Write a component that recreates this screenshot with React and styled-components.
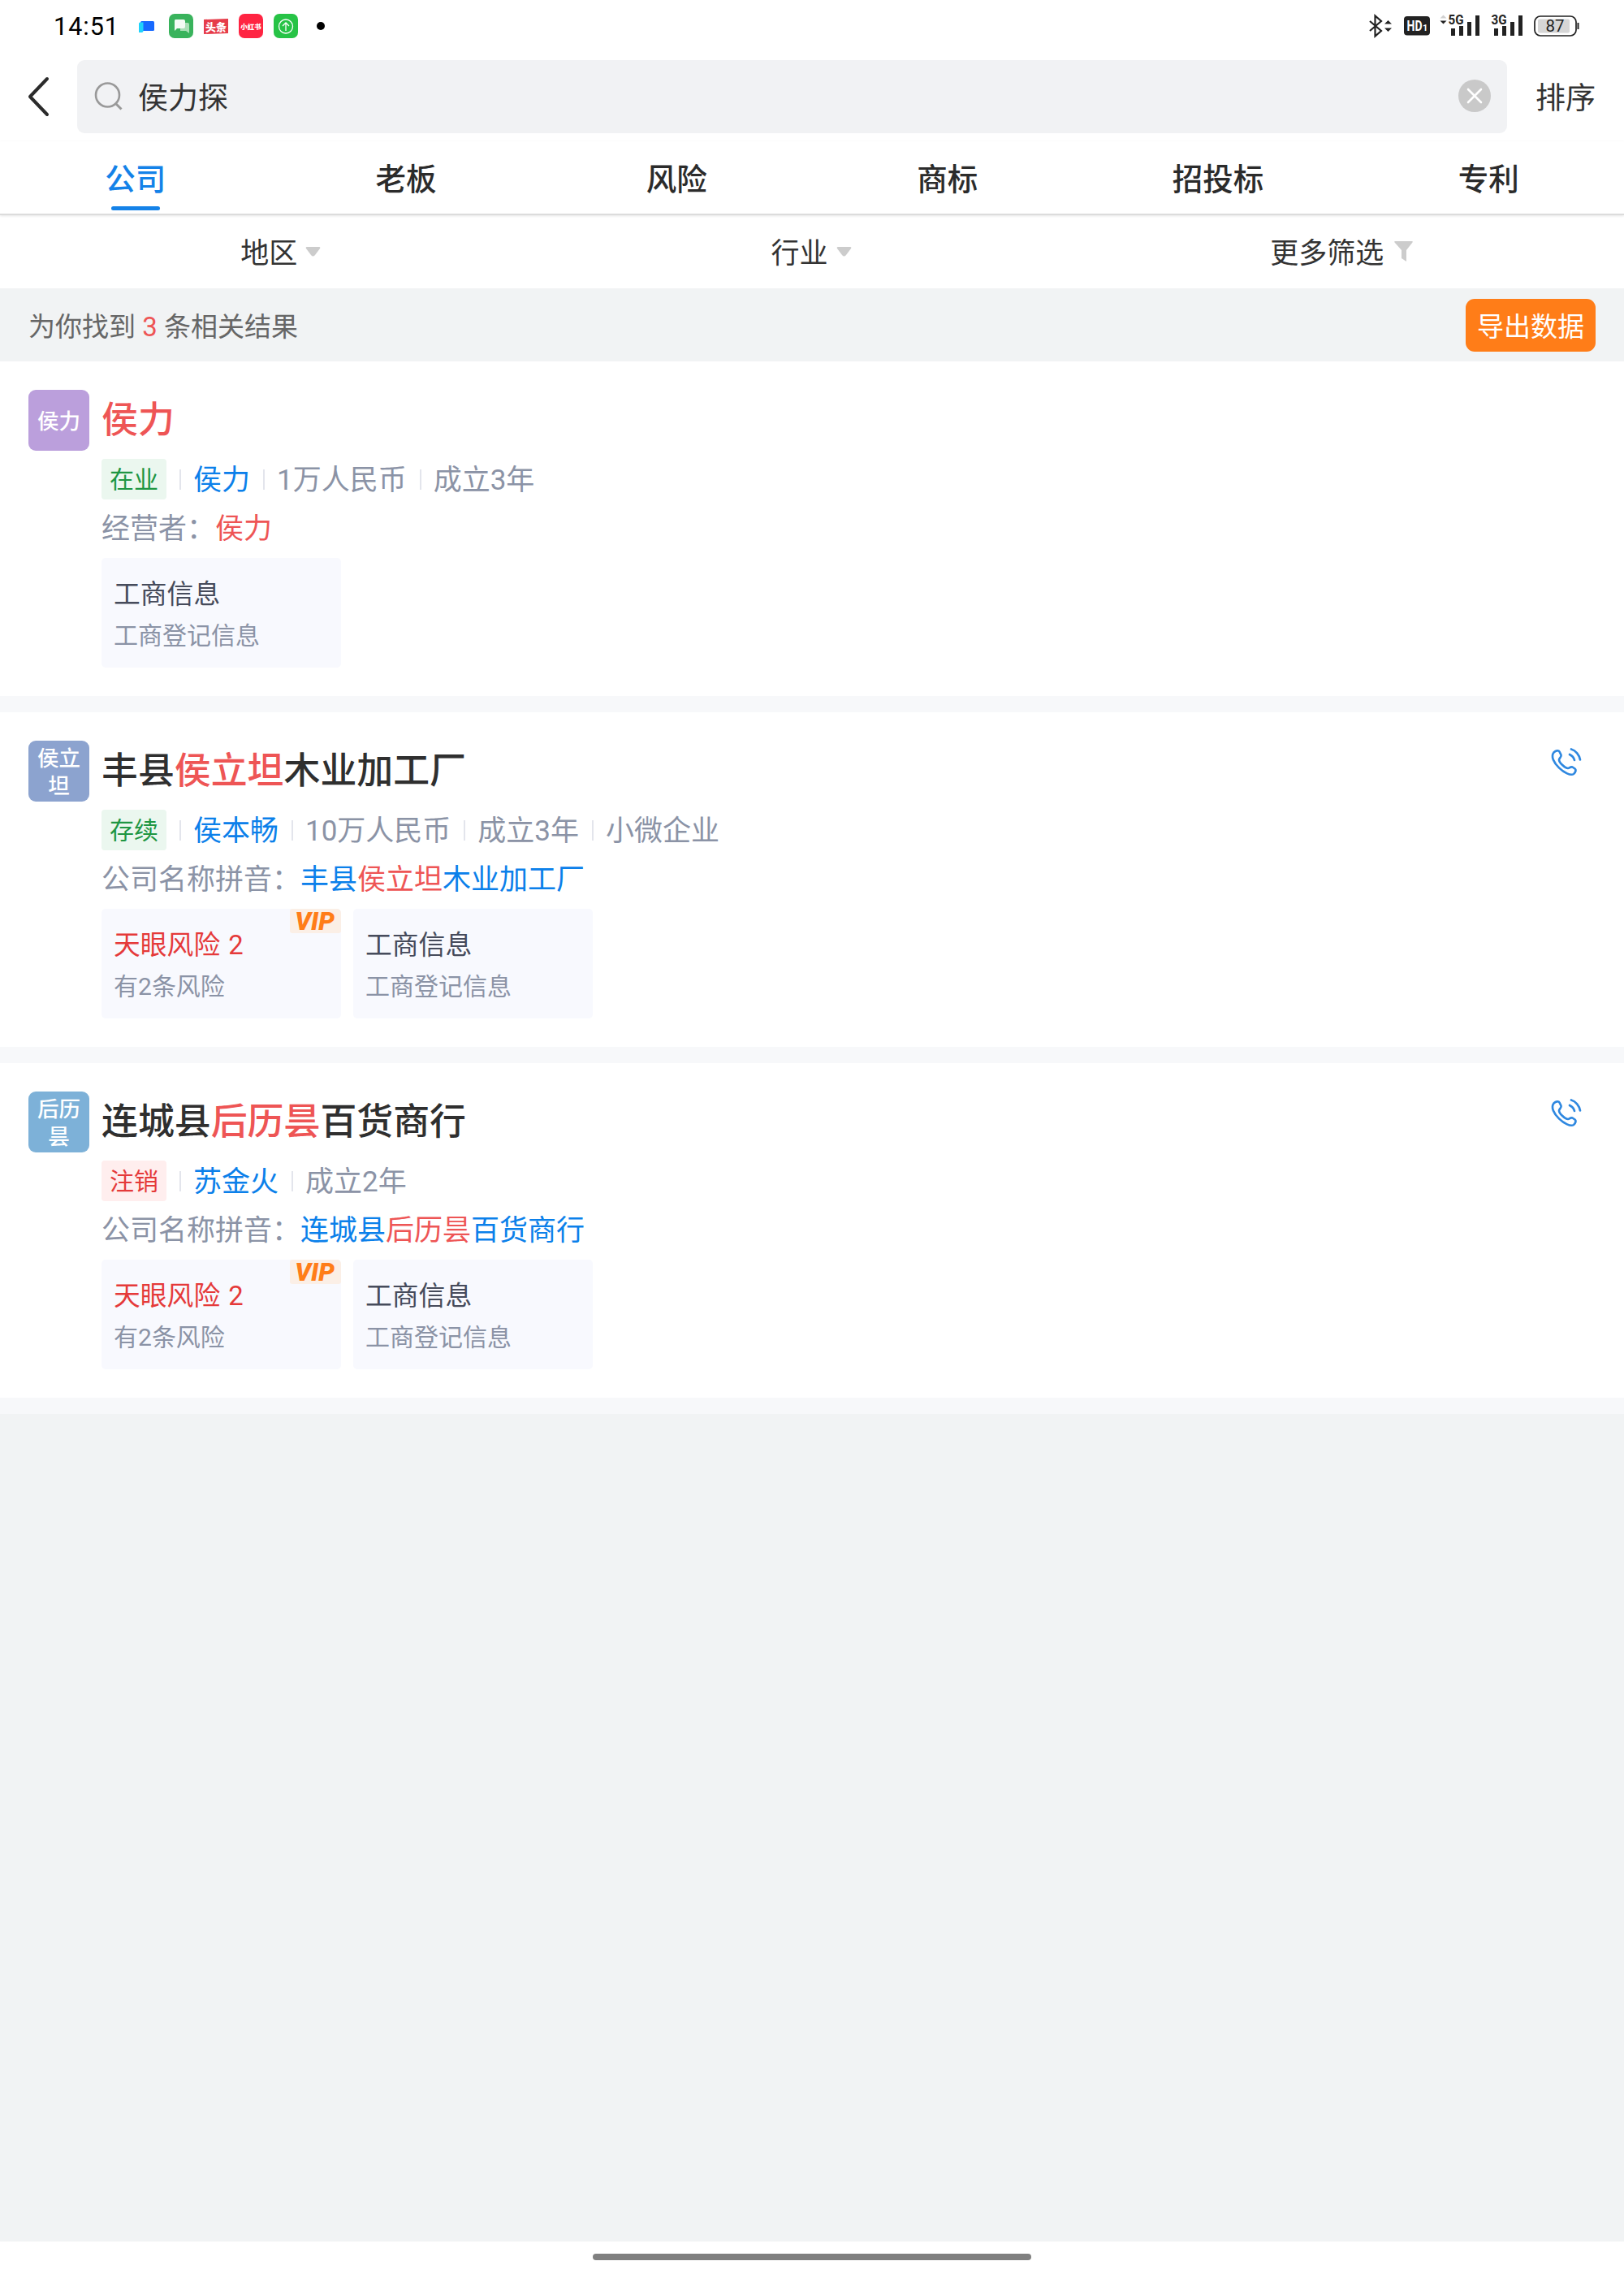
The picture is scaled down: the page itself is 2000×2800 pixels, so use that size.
import React from "react";
import styled, { createGlobalStyle } from "styled-components";

const GlobalStyle = createGlobalStyle`
body{
margin:0;
background:#f1f3f4;
font-family:Roboto,"Noto Sans CJK SC",sans-serif;
-webkit-font-smoothing:antialiased;
}
*{box-sizing:border-box;}
`;

const Page = styled.div`
width:2000px;
height:2800px;
display:flex;
flex-direction:column;
background:#f1f3f4;
overflow:hidden;
`;

const StatusBar = styled.div`
display:flex;
align-items:center;
justify-content:space-between;
height:64px;
padding:0 55px 0 66px;
background:#fff;
flex:none;
`;
const StatusGroup = styled.div`
display:flex;
align-items:center;
`;
const Time = styled.div`
width:101px;
font-size:30.5px;
letter-spacing:1px;
color:#000;
`;
const Glyph = styled.svg`
display:block;
flex:none;
overflow:visible;
margin-left:${props => props.$gap || 0}px;
`;

const SearchRow = styled.div`
display:flex;
align-items:center;
height:110px;
padding:0 33px;
background:#fff;
flex:none;
`;
const SearchBox = styled.div`
display:flex;
align-items:center;
width:1761px;
height:90px;
flex:none;
margin-left:33px;
padding:0 20px 0 21px;
border-radius:9px;
background:#f1f2f4;
`;
const Keyword = styled.div`
flex:1;
margin-left:18px;
padding-top:5px;
font-size:37px;
line-height:50px;
color:#333;
`;
const Sort = styled.div`
margin-left:35px;
padding-top:5px;
font-size:37px;
line-height:50px;
white-space:nowrap;
color:#333;
`;

const Tabs = styled.div`
display:flex;
height:91px;
border-bottom:2px solid #dcdcdc;
box-shadow:0 1px 3px rgba(0,0,0,0.1);
background:#fff;
flex:none;
position:relative;
`;
const Tab = styled.div`
flex:1;
display:flex;
flex-direction:column;
align-items:center;
padding-top:20px;
font-size:37.5px;
font-weight:500;
line-height:54px;
color:${props => props.$active ? "#1482e8" : "#2b2b2b"};
&::after{
content:"";
width:60px;
height:5px;
margin-top:6px;
border-radius:3px;
background:${props => props.$active ? "#1482e8" : "transparent"};
}
`;

const Filters = styled.div`
display:flex;
height:90px;
padding:0 21px 0 19px;
background:#fff;
flex:none;
`;
const Filter = styled.div`
flex:1;
display:flex;
align-items:center;
justify-content:center;
`;
const FilterLabel = styled.div`
padding-top:6px;
font-size:35px;
line-height:50px;
color:#333;
`;

const ResultBar = styled.div`
display:flex;
align-items:center;
justify-content:space-between;
height:90px;
padding:0 35px;
font-size:33px;
color:#666;
background:#f1f3f4;
flex:none;
`;
const Count = styled.span`
color:#ee5555;
`;
const ExportButton = styled.div`
width:160px;
height:65px;
padding-top:2px;
border-radius:11px;
line-height:65px;
text-align:center;
font-size:33px;
color:#fff;
background:#ff7d18;
`;

const Card = styled.div`
display:flex;
align-items:flex-start;
height:432px;
padding:35px 35px 0;
border-bottom:20px solid #f7f8fa;
background:#fff;
flex:none;
`;
const Avatar = styled.div`
display:flex;
align-items:center;
justify-content:center;
width:75px;
height:75px;
padding:2px 10px 0;
border-radius:9px;
font-size:26.5px;
font-weight:500;
line-height:34px;
text-align:center;
word-break:break-all;
color:#fff;
background:${props => props.$color};
`;
const Info = styled.div`
flex:1;
margin-left:15px;
`;
const Title = styled.div`
height:70px;
font-size:44.9px;
font-weight:500;
line-height:75px;
color:#2f2f2f;
`;
const Mark = styled.span`
color:#ee5555;
`;
const Meta = styled.div`
display:flex;
align-items:center;
height:50px;
margin-top:15px;
font-size:35px;
line-height:50px;
color:#8b93a6;
& > span{
padding-top:4px;
}
`;
const Badge = styled.div`
width:80px;
height:50px;
border-radius:4px;
font-size:30px;
line-height:52px;
text-align:center;
color:${props => props.$closed ? "#e53a3a" : "#1f9643"};
background:${props => props.$closed ? "#ffeeee" : "#ebf7ef"};
`;
const Divider = styled.div`
width:2px;
height:25px;
margin:0 15px 0 16px;
background:#e3e5ec;
`;
const Link = styled.span`
color:#0b80ea;
`;
const Match = styled.div`
height:50px;
margin-top:10px;
font-size:35px;
line-height:54px;
color:#8b93a6;
`;
const Tiles = styled.div`
display:flex;
gap:15px;
margin-top:12px;
`;
const Tile = styled.div`
position:relative;
width:295px;
height:135px;
padding:21px 15px;
border-radius:5px;
background:#f8f9fe;
`;
const TileTitle = styled.div`
font-size:32.8px;
line-height:48px;
word-spacing:2px;
color:${props => props.$risk ? "#e53a3a" : "#464b5b"};
`;
const TileText = styled.div`
margin-top:4px;
font-size:30px;
line-height:46px;
color:#8b93a6;
`;
const Vip = styled.div`
position:absolute;
top:0;
right:0;
width:63px;
height:30px;
padding-right:2px;
border-radius:3px 5px 3px 3px;
font-size:31px;
font-weight:900;
font-style:italic;
line-height:31px;
text-align:center;
color:#ff7d18;
background:#fbefe6;
`;

const PhoneCell = styled.div`
padding:8px 16px 0 0;
`;

const Spacer = styled.div`
flex:1;
`;
const HomeBar = styled.div`
display:flex;
justify-content:center;
align-items:flex-start;
height:40px;
padding-top:15px;
background:#fff;
flex:none;
&::after{
content:"";
width:540px;
height:8px;
border-radius:4px;
background:#808080;
}
`;

const tabs = ["公司", "老板", "风险", "商标", "招投标", "专利"];

const companies = [
    {
        avatar: "侯力",
        color: "#bb9fdc",
        name: ["", "侯力", ""],
        status: "在业",
        person: "侯力",
        meta: ["1万人民币", "成立3年"],
        label: "经营者：",
        match: ["", "侯力", ""],
    },
    {
        avatar: "侯立坦",
        color: "#8ca3cf",
        name: ["丰县", "侯立坦", "木业加工厂"],
        status: "存续",
        person: "侯本畅",
        meta: ["10万人民币", "成立3年", "小微企业"],
        label: "公司名称拼音：",
        match: ["丰县", "侯立坦", "木业加工厂"],
        risk: 2,
        phone: true,
    },
    {
        avatar: "后历昙",
        color: "#7db1d8",
        name: ["连城县", "后历昙", "百货商行"],
        status: "注销",
        closed: true,
        person: "苏金火",
        meta: ["成立2年"],
        label: "公司名称拼音：",
        match: ["连城县", "后历昙", "百货商行"],
        risk: 2,
        phone: true,
    },
];

function AppIcons() {
    return (
        <>
            <Glyph width="30" height="30" viewBox="0 0 30 30">
                <rect x="6" y="9" width="17" height="12" rx="1.5" fill="#1769ff" />
                <path d="M4 12q0-1.500 1.500-1.500h4v10.500q0 2-2 2h-3.500z" fill="#20d3fb" />
            </Glyph>
            <Glyph $gap={11} width="30" height="30" viewBox="0 0 30 30">
                <rect width="30" height="30" rx="7" fill="#39b35c" />
                <path d="M14 11h9q2 0 2 2v11l-4-3h-7z" fill="#a9dfb6" />
                <path d="M8 7h10q2 0 2 2v7q0 2-2 2h-8l-3 3v-12q0-2 1-2z" fill="#f3fbf4" />
            </Glyph>
            <Glyph $gap={13} width="30" height="30" viewBox="0 0 30 30">
                <path d="M0 7l30-1v18l-30 1z" fill="#e63c4a" />
                <text x="15" y="20.500" fontSize="13" fontWeight="900" textAnchor="middle" fill="#fff">头条</text>
            </Glyph>
            <Glyph $gap={13} width="30" height="30" viewBox="0 0 30 30">
                <rect width="30" height="30" rx="7" fill="#ff2442" />
                <text x="15" y="18.500" fontSize="8.500" fontWeight="900" textAnchor="middle" fill="#fff">小红书</text>
            </Glyph>
            <Glyph $gap={13} width="30" height="30" viewBox="0 0 30 30" fill="none" stroke="#fff" strokeWidth="1.3">
                <rect width="30" height="30" rx="7" fill="#27c346" stroke="none" />
                <circle cx="15" cy="15.500" r="8.500" />
                <path d="M15 21v-10M11 15l4-4 4 4" />
            </Glyph>
            <Glyph $gap={23} width="10" height="10" viewBox="0 0 10 10">
                <circle cx="5" cy="5" r="5" fill="#000" />
            </Glyph>
        </>
    );
}

function Signal({ label, arrows, gap }) {
    return (
        <Glyph $gap={gap} width="50" height="30" viewBox="0 -2 50 30" fill="#222">
            {arrows && <path d="M0.500 3.500l4-4 4 4z" fill="#d0d0d0" />}
            {arrows && <path d="M0.500 6.500h8l-4 4z" />}
            <text x="10.500" y="10.500" fontSize="16.500" fontWeight="700" textLength="19" lengthAdjust="spacingAndGlyphs">{label}</text>
            <path d="M14 16h5v9h-5zM24 13h5v12h-5zM34 8h5v17h-5zM44 0h5v25h-5z" />
        </Glyph>
    );
}

function SystemIcons() {
    return (
        <>
            <Glyph width="29" height="28" viewBox="0 0 29 28" fill="none" stroke="#222" strokeWidth="2.200">
                <path d="M1 8l14 12-7.500 6.500v-25l7.500 6.500-14 12" />
                <path d="M19 11.500l4.500-4.500 4.500 4.500zM19 16.500h9l-4.500 4.500z" fill="#222" stroke="none" />
            </Glyph>
            <Glyph $gap={14} width="32" height="24" viewBox="0 0 32 24">
                <rect width="32" height="23.500" rx="4" fill="#222" />
                <text x="3.500" y="18" fontSize="18" fontWeight="700" fill="#fff" textLength="19" lengthAdjust="spacingAndGlyphs">HD</text>
                <text x="23" y="18" fontSize="11" fontWeight="700" fill="#fff">1</text>
            </Glyph>
            <Signal label="5G" arrows gap={12} />
            <Signal label="3G" gap={3} />
            <Glyph $gap={13} width="56" height="26" viewBox="0 0 56 26">
                <rect x="1" y="1" width="51" height="24" rx="7" fill="#fff" stroke="#222" strokeWidth="1.700" />
                <rect x="5" y="4.500" width="39" height="17" rx="2" fill="#d6d6d6" />
                <path d="M53.500 9h2v8h-2z" fill="#222" />
                <text x="26" y="20" fontSize="20.500" textAnchor="middle" fill="#222">87</text>
            </Glyph>
        </>
    );
}

function PhoneIcon() {
    return (
        <Glyph width="40" height="38" viewBox="0 0 40 38" fill="none" stroke="#2f88e0" strokeWidth="2.700" strokeLinecap="round" strokeLinejoin="round">
            <path d="M4.500 6.500C7 4 10.500 3.500 11.500 5.500L13.500 9.500C14.500 12 11 13.500 11 15.500C11 19 18.500 26 22 26C24 26 25 23.500 27.500 24.500L30.500 26.500C32.500 28 31 31.500 29 33C21.500 38 -3.500 16.500 4.500 6.500Z" />
            <path d="M24 9C27 10.500 29.300 13 30 16M26 2.500C31.500 4 36 9.500 37 15.500" />
        </Glyph>
    );
}

function Arrow() {
    return (
        <Glyph $gap={10} width="19" height="12" viewBox="0 0 19 12">
            <path d="M2 0h15q2 0 1 2l-6 8q-2.500 3-5 0l-6-8q-1-2 1-2z" fill="#ccc" />
        </Glyph>
    );
}

function Company({ item }) {
    return (
        <Card>
            <Avatar $color={item.color}>{item.avatar}</Avatar>
            <Info>
                <Title>{item.name[0]}<Mark>{item.name[1]}</Mark>{item.name[2]}</Title>
                <Meta>
                    <Badge $closed={item.closed}>{item.status}</Badge>
                    <Divider />
                    <Link>{item.person}</Link>
                    {item.meta.map(text => (
                        <React.Fragment key={text}>
                            <Divider />
                            <span>{text}</span>
                        </React.Fragment>
                    ))}
                </Meta>
                <Match>
                    {item.label}
                    <Link>{item.match[0]}<Mark>{item.match[1]}</Mark>{item.match[2]}</Link>
                </Match>
                <Tiles>
                    {item.risk && (
                        <Tile>
                            <TileTitle $risk>天眼风险 {item.risk}</TileTitle>
                            <TileText>有{item.risk}条风险</TileText>
                            <Vip>VIP</Vip>
                        </Tile>
                    )}
                    <Tile>
                        <TileTitle>工商信息</TileTitle>
                        <TileText>工商登记信息</TileText>
                    </Tile>
                </Tiles>
            </Info>
            {item.phone && <PhoneCell><PhoneIcon /></PhoneCell>}
        </Card>
    );
}

export default function App() {
    return (
        <Page>
            <GlobalStyle />
            <StatusBar>
                <StatusGroup>
                    <Time>14:51</Time>
                    <AppIcons />
                </StatusGroup>
                <StatusGroup>
                    <SystemIcons />
                </StatusGroup>
            </StatusBar>
            <SearchRow>
                <Glyph width="29" height="50" viewBox="0 0 29 50" fill="none" stroke="#2b2b2b" strokeWidth="4" strokeLinecap="round" strokeLinejoin="round">
                    <path d="M25 3L4 25l21 22" />
                </Glyph>
                <SearchBox>
                    <Glyph width="36" height="36" viewBox="0 0 36 36" fill="none" stroke="#999" strokeWidth="2.600">
                        <circle cx="16.500" cy="16" r="14.500" />
                        <path d="M27 27l6.500 6.500" strokeWidth="3" />
                    </Glyph>
                    <Keyword>侯力探</Keyword>
                    <Glyph width="40" height="40" viewBox="0 0 40 40">
                        <circle cx="20" cy="19" r="20" fill="#c9c9c9" />
                        <path d="M12 11l16 16M28 11l-16 16" stroke="#fff" strokeWidth="2.600" strokeLinecap="round" />
                    </Glyph>
                </SearchBox>
                <Sort>排序</Sort>
            </SearchRow>
            <Tabs>
                {tabs.map((tab, i) => <Tab key={tab} $active={i === 0}>{tab}</Tab>)}
            </Tabs>
            <Filters>
                <Filter><FilterLabel>地区</FilterLabel><Arrow /></Filter>
                <Filter><FilterLabel>行业</FilterLabel><Arrow /></Filter>
                <Filter>
                    <FilterLabel>更多筛选</FilterLabel>
                    <Glyph $gap={13} width="23" height="26" viewBox="0 0 23 26">
                        <path d="M1 0h21q1.500 0 0.500 1.500l-7.500 9.500v14l-6-4v-10l-8.500-9.500q-1-1.500 0.500-1.500z" fill="#ccc" />
                    </Glyph>
                </Filter>
            </Filters>
            <ResultBar>
                <div>为你找到 <Count>3</Count> 条相关结果</div>
                <ExportButton>导出数据</ExportButton>
            </ResultBar>
            {companies.map(item => <Company key={item.avatar} item={item} />)}
            <Spacer />
            <HomeBar />
        </Page>
    );
}
